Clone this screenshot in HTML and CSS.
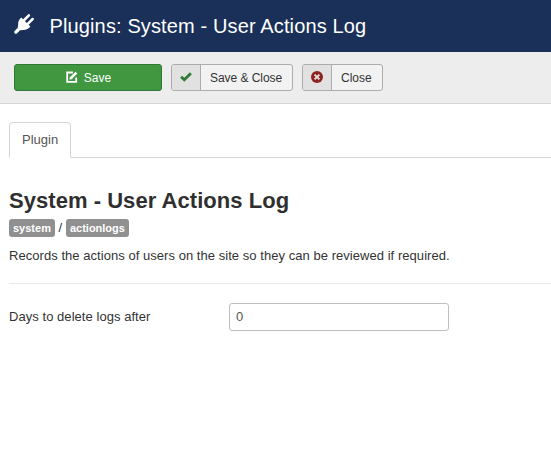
FILE: index.html
```html
<!DOCTYPE html>
<html lang="en">
<head>
<meta charset="utf-8">
<title>Plugins: System - User Actions Log</title>
<link rel="stylesheet" href="styles.css">
</head>
<body>
<header class="header">
  <svg class="plug" viewBox="0 0 20 20" width="20" height="20" aria-hidden="true">
    <path class="fill" d="M7.2 3.4 16.4 12.6Q13.2 16.6 8 15.9L6.6 16.4 3.6 13.4 4.1 11.9Q3.5 6.6 7.2 3.4Z"/>
    <path class="cord" d="M4.2 15.8 1.9 18.1"/>
    <path class="stroke" d="M10.2 6 14.9 1.3M13.8 9.8 18.6 5"/>
  </svg>
  <h1>Plugins: System - User Actions Log</h1>
</header>
<div class="toolbar">
  <button class="btn save">
    <svg viewBox="0 0 12 12" width="12" height="12" aria-hidden="true"><path class="page" d="M7 1.5H1.2V10.9H10.2V6.5"/><path class="pen" d="M3 9.2 3.5 6.3 9.4.4 11.7 2.6 5.8 8.6Z"/></svg>
    <span>Save</span>
  </button>
  <button class="btn">
    <span class="icon"><svg viewBox="0 0 12 10" width="12" height="10" aria-hidden="true"><path class="check" d="M1.1 4.7 4.3 7.8 10.9 1.3"/></svg></span>
    <span class="text">Save &amp; Close</span>
  </button>
  <button class="btn">
    <span class="icon"><svg viewBox="0 0 12 12" width="12" height="12" aria-hidden="true"><circle class="disc" cx="6" cy="6" r="6"/><path class="cross" d="M3.6 3.6 8.4 8.4M8.4 3.6 3.6 8.4"/></svg></span>
    <span class="text">Close</span>
  </button>
</div>
<main>
  <nav class="tabs"><a class="tab">Plugin</a></nav>
  <h2>System - User Actions Log</h2>
  <div class="labels"><span class="label">system</span><span class="slash">/</span><span class="label">actionlogs</span></div>
  <p>Records the actions of users on the site so they can be reviewed if required.</p>
  <hr>
  <div class="field">
    <label for="days">Days to delete logs after</label>
    <input id="days" type="text" value="0">
  </div>
</main>
</body>
</html>
```
FILE: styles.css
```css
* { box-sizing: border-box; }
body {
  margin: 0;
  background: #fff;
  color: #333;
  font: 13px/18px "Liberation Sans", Arial, sans-serif;
  overflow: hidden;
}
svg { display: block; flex: none; }
.header {
  display: flex;
  height: 52px;
  padding: 14px 14px 0;
  gap: 15.5px;
  background: #1a3058;
  color: #fff;
}
.plug .fill { fill: #fff; }
.plug .stroke { fill: none; stroke: #fff; stroke-width: 2.5; stroke-linecap: round; }
.plug .cord { fill: none; stroke: #fff; stroke-width: 3.4; stroke-linecap: round; }
.header h1 {
  margin: 0;
  font-size: 20px;
  line-height: 25px;
  font-weight: 400;
  white-space: nowrap;
  letter-spacing: .13px;
}
.toolbar {
  display: flex;
  height: 52px;
  padding: 12px 14px;
  gap: 9px;
  background: #ededed;
  border-bottom: 1px solid #d6d6d6;
}
.btn {
  display: flex;
  height: 27px;
  padding: 0;
  border: 1px solid #acacac;
  border-radius: 3px;
  background: #f2f2f2;
  color: #333;
  font: 12px/27px "Liberation Sans", Arial, sans-serif;
  overflow: hidden;
}
.save {
  width: 148px;
  align-items: center;
  justify-content: center;
  gap: 6px;
  background: #409740;
  border-color: #2f7835;
  color: #fff;
}
.save svg { margin: 0 0 1px 1px; }
.save span { padding-top: 2px; }
.icon {
  display: flex;
  width: 29px;
  height: 25px;
  padding-bottom: 1px;
  align-items: center;
  justify-content: center;
  background: #e1e1e1;
  border-right: 1px solid #acacac;
}
.text { padding: 0 10px 0 9px; letter-spacing: -.05px; }
.page { fill: none; stroke: #fff; stroke-width: 1.8; }
.pen { fill: #fff; stroke: #409740; stroke-width: .7; }
.check { fill: none; stroke: #317b36; stroke-width: 2.8; }
.disc { fill: #8b2420; }
.cross { stroke: #e7dddd; stroke-width: 2; }
main { padding: 18px 0 0 9px; }
.tabs {
  display: flex;
  height: 36px;
  border-bottom: 1px solid #d5d5d5;
}
.tab {
  width: 62px;
  height: 36px;
  padding: 8px 12px;
  border: 1px solid #d5d5d5;
  border-bottom-color: #fff;
  border-radius: 4px 4px 0 0;
  background: #fff;
  color: #555;
}
h2 {
  margin: 29px 0 0;
  font-size: 22px;
  line-height: 28px;
  letter-spacing: .04px;
  color: #2f2f2f;
}
.labels { display: flex; height: 18px; margin-top: 4px; }
.label {
  padding: 0 4px;
  border-radius: 3px;
  background: #909090;
  color: #fff;
  font-size: 11px;
  font-weight: 700;
}
.slash { width: 11px; text-align: center; }
p { margin: 10px 0 0; letter-spacing: .045px; }
hr { margin: 18px 0 19px; border: 0; border-top: 1px solid #e8e8e8; }
.field { display: flex; }
.field label { width: 220px; padding-top: 5px; letter-spacing: .05px; }
.field input {
  width: 220px;
  height: 28px;
  padding: 3px 6px 5px;
  border: 1px solid #bfbfbf;
  border-radius: 3px;
  background: #fff;
  color: #555;
  font: 13px/18px "Liberation Sans", Arial, sans-serif;
}
```
